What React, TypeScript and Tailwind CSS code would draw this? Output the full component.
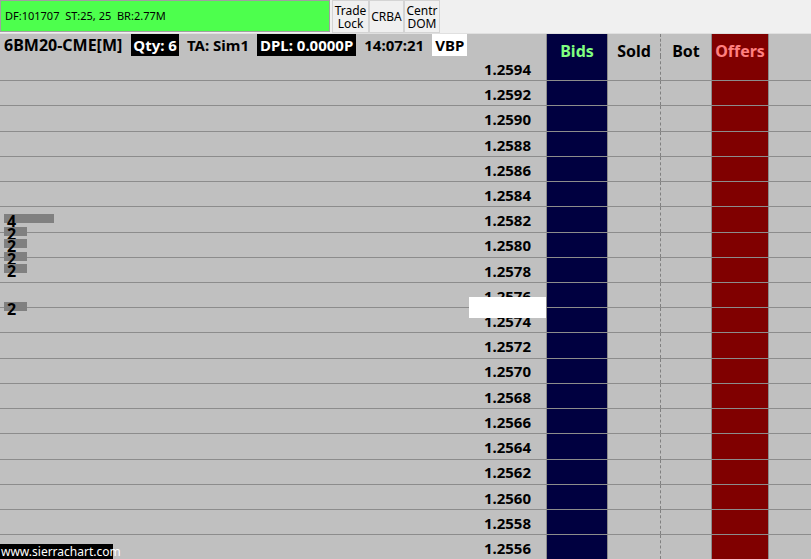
import React from 'react';

const prices = [
    '1.2594', '1.2592', '1.2590', '1.2588', '1.2586', '1.2584', '1.2582', '1.2580', '1.2578', '1.2576',
    '1.2574', '1.2572', '1.2570', '1.2568', '1.2566', '1.2564', '1.2562', '1.2560', '1.2558', '1.2556',
];

const TopButton = ({ lines, className }: { lines: string[]; className: string }) => (
    <div className={`flex h-[33px] flex-col items-center justify-center border border-[#d4d4d4] bg-[#f0f0f0] text-[12px] leading-[13px] text-black ${className}`}>
        {lines.map((l) => (
            <span key={l}>{l}</span>
        ))}
    </div>
);

const PriceRow = ({ price }: { price: string }) => {
    return (
        <div className="flex h-[25.22px] border-b border-[#8c8c8c]">
            <div className="flex w-[546px] items-center justify-end pr-[15px] pt-[2px] text-[15px] font-bold text-black">
                {price}
            </div>
            <div className="w-[61px] border-l border-[#8c8c8c] bg-[#000040]" />
            <div className="w-[53px] border-l border-[#8c8c8c]" />
            <div className="w-[51px] border-l border-dashed border-[#808080]" />
            <div className="w-[57px] border-l border-[#8c8c8c] bg-[#800000]" />
            <div className="flex-1 border-l border-[#8c8c8c]" />
        </div>
    );
};

const Bar = ({ top, wide, n }: { top: string; wide: boolean; n: string }) => (
    <div className={`absolute left-[4px] ${top}`}>
        <div className={`h-[9px] bg-[#808080] ${wide ? 'w-[50px]' : 'w-[23px]'}`} />
        <span className="absolute left-[3px] top-[-1px] text-[16px] font-bold leading-none text-black">{n}</span>
    </div>
);

export default function App() {
    return (
        <div className="relative h-[559px] w-[811px] overflow-hidden bg-[#c0c0c0] font-['Noto_Sans',sans-serif]">
            {/* top bar */}
            <div className="flex h-[34px] items-start border-b border-[#e0e0e0] bg-[#f0f0f0]">
                <div className="flex h-[32px] w-[330px] items-center border border-[#a0a0a0] bg-[#4dff4d] pl-[4px] text-[11px] whitespace-pre text-black">
                    DF:101707  ST:25, 25  BR:2.77M
                </div>
                <TopButton lines={['Trade', 'Lock']} className="ml-[2px] w-[37px]" />
                <TopButton lines={['CRBA']} className="w-[35px]" />
                <TopButton lines={['Centr', 'DOM']} className="w-[36px]" />
            </div>

            <div className="relative">
                {/* header row */}
                <div className="relative z-10 flex h-[22px]">
                    <div className="flex w-[546px] items-stretch pl-[4px] text-[15px] font-bold text-black">
                        <span className="flex items-center text-[16px]">6BM20-CME[M]</span>
                        <span className="ml-[9px] flex items-center bg-black px-[2px] text-white">Qty: 6</span>
                        <span className="ml-[8px] flex items-center">TA: Sim1</span>
                        <span className="ml-[8px] flex items-center bg-black px-[3px] text-white">DPL: 0.0000P</span>
                        <span className="ml-[8px] flex items-center">14:07:21</span>
                        <span className="ml-[8px] flex items-center bg-white px-[3px]">VBP</span>
                    </div>
                    <div className="w-[61px] border-l border-[#8c8c8c] bg-[#000040] pt-[9px] text-center text-[16px] font-bold leading-none text-[#80ff80]">
                        Bids
                    </div>
                    <div className="w-[53px] border-l border-[#8c8c8c] pt-[9px] text-center text-[16px] font-bold leading-none text-black">
                        Sold
                    </div>
                    <div className="w-[51px] border-l border-dashed border-[#808080] pt-[9px] text-center text-[16px] font-bold leading-none text-black">
                        Bot
                    </div>
                    <div className="w-[57px] border-l border-[#8c8c8c] bg-[#800000] pt-[9px] text-center text-[16px] font-bold leading-none text-[#ff8080]">
                        Offers
                    </div>
                    <div className="flex-1 border-l border-[#8c8c8c]" />
                </div>

                {prices.map((p) => (
                    <PriceRow key={p} price={p} />
                ))}

                {/* volume by price bars */}
                <Bar top="top-[180px]" wide n="4" />
                <Bar top="top-[192.6px]" wide={false} n="2" />
                <Bar top="top-[205.2px]" wide={false} n="2" />
                <Bar top="top-[217.8px]" wide={false} n="2" />
                <Bar top="top-[230.4px]" wide={false} n="2" />
                <Bar top="top-[268px]" wide={false} n="2" />

                {/* last price marker */}
                <div className="absolute left-[469px] top-[263px] h-[21px] w-[77px] bg-white" />
            </div>

            <div className="absolute bottom-0 left-0 h-[15px] w-[113px] bg-black pl-[1px] text-[12px] leading-[15px] text-white">
                www.sierrachart.com
            </div>
        </div>
    );
}
